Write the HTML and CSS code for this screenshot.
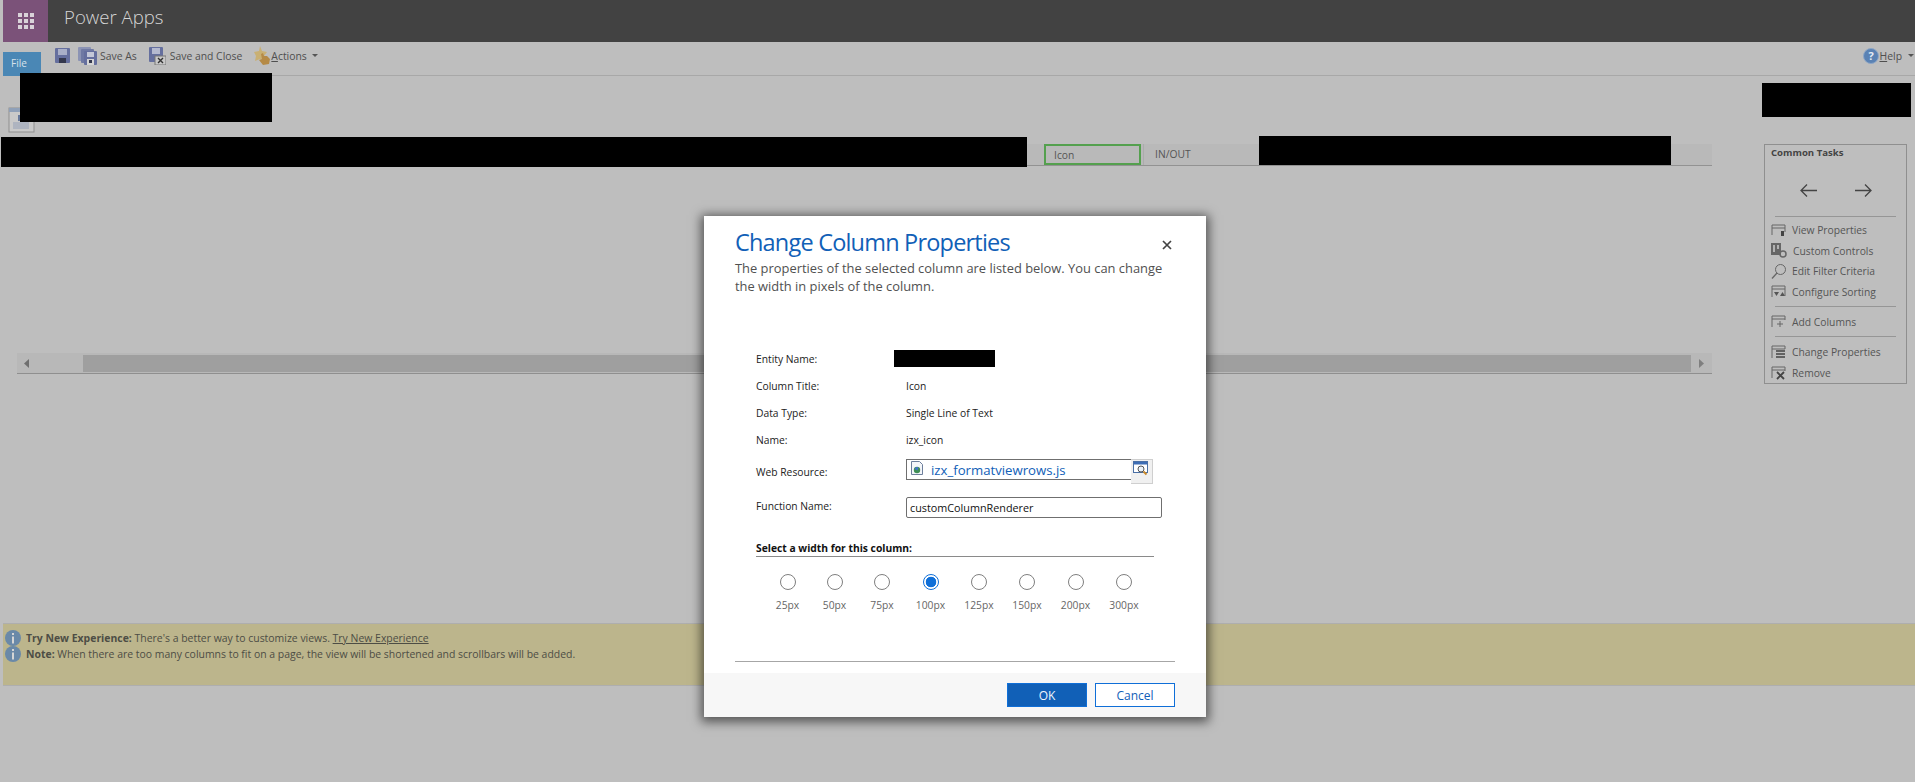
FILE: index.html
```html
<!DOCTYPE html>
<html lang="en">
<head>
<meta charset="utf-8">
<title>Power Apps</title>
<link rel="stylesheet" href="styles.css">
</head>
<body>
<header class="topbar">
  <div class="waffle">
    <svg width="16" height="16" viewBox="0 0 16 16" fill="#d9d3d9"><rect width="4" height="4"/><rect x="6" width="4" height="4"/><rect x="12" width="4" height="4"/><rect y="6" width="4" height="4"/><rect x="6" y="6" width="4" height="4"/><rect x="12" y="6" width="4" height="4"/><rect y="12" width="4" height="4"/><rect x="6" y="12" width="4" height="4"/><rect x="12" y="12" width="4" height="4"/></svg>
  </div>
  <div class="brand">Power Apps</div>
</header>

<nav class="toolbar">
  <div class="filetab">File</div>
  <svg class="tool-save" width="15" height="15" viewBox="0 0 15 15"><rect width="15" height="15" rx="1" fill="#656f9e"/><rect x="3" y="1" width="9" height="6" fill="#a9afc8"/><rect x="4" y="10" width="7" height="5" fill="#33374d"/></svg>
  <svg class="tool-saveas" width="19" height="18" viewBox="0 0 19 18"><rect width="13" height="14" rx="1" fill="#8b93b4"/><rect x="3" y="2" width="13" height="14" rx="1" fill="#6f79a3"/><rect x="6" y="4" width="13" height="14" rx="1" fill="#656f9e"/><rect x="9" y="5" width="7" height="5" fill="#c4c8d8"/><rect x="9" y="12" width="7" height="6" fill="#d5d5d5"/><rect x="11" y="13" width="3" height="3" fill="#33374d"/></svg>
  <span class="tool-text tool-text-saveas">Save As</span>
  <svg class="tool-close" width="17" height="18" viewBox="0 0 17 18"><rect width="14" height="15" rx="1" fill="#656f9e"/><rect x="3" y="1" width="8" height="6" fill="#b4b9cf"/><rect x="6" y="9" width="11" height="9" fill="#c8c8c8" stroke="#777"/><path d="M9 11l5 5M14 11l-5 5" stroke="#333" stroke-width="1.4"/></svg>
  <span class="tool-text tool-text-close">Save and Close</span>
  <svg class="tool-actions" width="17" height="19" viewBox="0 0 17 19"><path d="M6 0l2 5 5 1-3 4 1 5-5-2-5 2 1-5-2-4 5-1z" fill="#c9b073"/><path d="M7 8l2-1 1 3 3 0 3 3-1 5-6 1-4-5 3-1z" fill="#b58a46"/></svg>
  <span class="tool-text"><u>A</u>ctions</span>
  <span class="caret"></span>
  <div class="help">
    <svg width="16" height="16" viewBox="0 0 16 16"><circle cx="8" cy="8" r="7.5" fill="#5a82b4" stroke="#8da6c6"/><text x="8" y="12" text-anchor="middle" class="help-q">?</text></svg>
    <span class="tool-text"><u>H</u>elp</span>
    <span class="caret"></span>
  </div>
</nav>

<main class="workspace">
  <div class="editor">
    <svg class="view-icon" width="27" height="28" viewBox="0 0 27 28"><rect x="1" y="1" width="25" height="24" fill="#c9c9c9" stroke="#8f8f8f"/><rect x="1" y="1" width="25" height="4" fill="#8fa0b8"/><rect x="10" y="8" width="7" height="6" fill="#66789a"/><rect x="5" y="15" width="16" height="7" fill="#aeb4c0"/></svg>
    <div class="columns">
      <div class="col-spacer"></div>
      <div class="col col-icon">Icon</div>
      <div class="col col-inout">IN/OUT</div>
    </div>
    <div class="hscroll">
      <svg class="arrow" width="5" height="9" viewBox="0 0 5 9"><path d="M5 0v9L0 4.500z" fill="#6f6f6f"/></svg>
      <div class="thumb"></div>
      <svg class="arrow" width="5" height="9" viewBox="0 0 5 9"><path d="M0 0v9l5-4.500z" fill="#7f7f7f"/></svg>
    </div>
  </div>

  <aside class="tasks">
    <h3 class="tasks-title">Common Tasks</h3>
    <div class="tasks-arrows">
      <svg width="17" height="13" viewBox="0 0 17 13" fill="none" stroke="#444" stroke-width="1.300"><path d="M17 6.500H1M7 .5l-6 6 6 6"/></svg>
      <svg width="17" height="13" viewBox="0 0 17 13" fill="none" stroke="#444" stroke-width="1.300"><path d="M0 6.500h16M10 .5l6 6-6 6"/></svg>
    </div>
    <div class="tasks-rule rule-first"></div>
    <div class="task"><svg width="15" height="13" viewBox="0 0 15 13" fill="none" stroke="#666"><path d="M1 11V1h13v7M1 4h13"/><path d="M10 7h3v5h-3z" fill="#444" stroke="none"/></svg>View Properties</div>
    <div class="task"><svg width="16" height="15" viewBox="0 0 16 15"><rect width="10" height="12" fill="#666"/><path d="M3 2v7M7 2v4" stroke="#ccc" stroke-width="1.500"/><circle cx="12" cy="11" r="3" fill="none" stroke="#666" stroke-width="1.500"/></svg>Custom Controls</div>
    <div class="task"><svg width="15" height="15" viewBox="0 0 15 15" fill="none" stroke="#666"><circle cx="9.500" cy="5.500" r="5"/><path d="M6 9l-5 5.500" stroke-width="1.300"/></svg>Edit Filter Criteria</div>
    <div class="task"><svg width="15" height="13" viewBox="0 0 15 13" fill="none" stroke="#666"><path d="M1 12V1h13v10M1 4h13"/><path d="M3 7h5l-2.500 4zM9 11l2.500-4 2.500 4z" fill="#555" stroke="none"/></svg>Configure Sorting</div>
    <div class="tasks-rule rule-mid"></div>
    <div class="task"><svg width="15" height="13" viewBox="0 0 15 13" fill="none" stroke="#666"><path d="M1 12V1h13v4M1 4h13M9 6v6M6 9h6"/></svg>Add Columns</div>
    <div class="tasks-rule rule-mid"></div>
    <div class="task"><svg width="15" height="14" viewBox="0 0 15 14" fill="none" stroke="#666"><path d="M1 13V1h13v3M1 4h13"/><path d="M5 6h9M5 9h9M5 12h9" stroke="#444" stroke-width="1.600"/></svg>Change Properties</div>
    <div class="task"><svg width="15" height="14" viewBox="0 0 15 14" fill="none" stroke="#666"><path d="M1 12V1h13v4M1 4h13"/><path d="M6 6l7 7M13 6l-7 7" stroke="#444" stroke-width="1.800"/></svg>Remove</div>
  </aside>
</main>

<section class="notice">
  <p class="notice-line"><svg width="16" height="16" viewBox="0 0 16 16"><circle cx="8" cy="8" r="8" fill="#6a89a8"/><rect x="7" y="6.500" width="2" height="7" fill="#d5d5d5"/><rect x="7" y="3" width="2" height="2" fill="#d5d5d5"/></svg><span><b>Try New Experience:</b> There's a better way to customize views. <u>Try New Experience</u></span></p>
  <p class="notice-line"><svg width="16" height="16" viewBox="0 0 16 16"><circle cx="8" cy="8" r="8" fill="#6a89a8"/><rect x="7" y="6.500" width="2" height="7" fill="#d5d5d5"/><rect x="7" y="3" width="2" height="2" fill="#d5d5d5"/></svg><span><b>Note:</b> When there are too many columns to fit on a page, the view will be shortened and scrollbars will be added.</span></p>
</section>

<div class="redact redact-name"></div>
<div class="redact redact-corner"></div>
<div class="redact redact-strip"></div>
<div class="redact redact-cols"></div>

<div class="dialog" role="dialog">
  <div class="dialog-head">
    <h1 class="dialog-title">Change Column Properties</h1>
    <svg class="dialog-x" width="10" height="10" viewBox="0 0 10 10"><path d="M1 1l8 8M9 1l-8 8" stroke="#444" stroke-width="1.700"/></svg>
  </div>
  <p class="dialog-desc">The properties of the selected column are listed below. You can change the width in pixels of the column.</p>
  <div class="fields">
    <span class="lbl">Entity Name:</span><span class="val"><span class="redact-inline"></span></span>
    <span class="lbl">Column Title:</span><span class="val">Icon</span>
    <span class="lbl">Data Type:</span><span class="val">Single Line of Text</span>
    <span class="lbl">Name:</span><span class="val">izx_icon</span>
    <span class="lbl lbl-web">Web Resource:</span>
    <div class="lookup">
      <div class="lookup-box">
        <svg width="12" height="14" viewBox="0 0 12 14"><path d="M.5.500h8l3 3v10H.5z" fill="#f4f6fa" stroke="#6d7f9c"/><circle cx="6" cy="9" r="3.200" fill="#3f8f55"/><path d="M3.500 8a3 3 0 0 1 4-1.500l-1 3z" fill="#3f74c9"/></svg>
        <a class="lookup-link">izx_formatviewrows.js</a>
      </div>
      <div class="lookup-btn"><svg width="16" height="15" viewBox="0 0 16 15"><rect x=".5" y=".5" width="14" height="11" fill="#fff" stroke="#4a6fa5"/><rect x="1" y="1" width="13" height="2.500" fill="#3d6db5"/><circle cx="8" cy="8" r="3" fill="#eaf2fb" stroke="#555"/><path d="M10.500 10.500l3 3" stroke="#c98a2b" stroke-width="2"/></svg></div>
    </div>
    <span class="lbl">Function Name:</span>
    <div class="textbox">customColumnRenderer</div>
  </div>
  <h4 class="width-head">Select a width for this column:</h4>
  <div class="widths">
    <label class="width"><input type="radio" name="w"><span>25px</span></label>
    <label class="width"><input type="radio" name="w"><span>50px</span></label>
    <label class="width"><input type="radio" name="w"><span>75px</span></label>
    <label class="width"><input type="radio" name="w" checked><span>100px</span></label>
    <label class="width"><input type="radio" name="w"><span>125px</span></label>
    <label class="width"><input type="radio" name="w"><span>150px</span></label>
    <label class="width"><input type="radio" name="w"><span>200px</span></label>
    <label class="width"><input type="radio" name="w"><span>300px</span></label>
  </div>
  <div class="dialog-rule"></div>
  <div class="dialog-foot">
    <button class="btn btn-ok">OK</button>
    <button class="btn btn-cancel">Cancel</button>
  </div>
</div>
</body>
</html>
```

FILE: styles.css
```css
* { box-sizing: border-box; }
html, body { margin: 0; height: 782px; overflow: hidden; }
body {
  position: relative;
  background: #bebebe;
  font-family: "Open Sans", "Liberation Sans", sans-serif;
  font-size: 10.3px;
  color: #4a4a4a;
  padding-left: 3px;
}

/* top bar */
.topbar { display: flex; height: 42px; background: #424242; }
.waffle { width: 45px; background: #7b5279; display: flex; align-items: center; justify-content: center; padding-bottom: 1px; }
.brand { margin-left: 16px; font-size: 18.6px; font-weight: 300; line-height: 34px; color: #d6d6d6; }

/* toolbar */
.toolbar { display: flex; align-items: center; height: 34px; border-bottom: 1px solid #a8a8a8; position: relative; padding-bottom: 6px; }
.filetab { position: absolute; left: 0; top: 10px; width: 38px; height: 24px; background: #4a87b5; color: #d8e2ea; padding: 0 6px 0 0; text-align: center; line-height: 23px; font-size: 10px; }
.tool-save { margin-left: 52px; }
.tool-saveas { margin-left: 8px; }
.tool-text { font-size: 10.4px; color: #4f4f4f; white-space: nowrap; }
.tool-text-saveas { margin-left: 3px; }
.tool-close { margin-left: 12px; }
.tool-text-close { margin-left: 4px; }
.tool-actions { margin-left: 12px; }
.caret { margin-left: 5px; width: 0; height: 0; border: 3px solid transparent; border-top: 3px solid #555; border-bottom: 0; }
.help { margin-left: auto; display: flex; align-items: center; gap: 1px; padding-right: 1px; }
.help-q { font-size: 11px; font-weight: 700; fill: #e4ecf5; }

/* main region */
.workspace { display: flex; height: 547px; }
.editor { width: 1709px; padding-top: 31px; position: relative; }
.view-icon { position: absolute; left: 5px; top: 31px; }
.columns { display: flex; height: 22px; margin-top: 37px; background: #b9b9b9; border-bottom: 1px solid #929292; }
.col-spacer { width: 1041px; }
.col { font-size: 10.3px; line-height: 19px; color: #555; padding-left: 9px; }
.col-icon { width: 97px; height: 21px; border: 2px solid #54a04e; padding-left: 8px; }
.col-inout { margin-left: 2px; padding-left: 11px; width: 100px; border-left: 1px solid #acacac; line-height: 20px; }
.hscroll { display: flex; align-items: center; margin: 187px 0 0 14px; height: 21px; padding: 0 8px 0 7px; background: #b8b8b8; border-bottom: 1px solid #8f8f8f; }
.arrow { flex: none; }
.thumb { width: 1608px; height: 17px; margin: 0 0 0 54px; background: #9f9f9f; }
.hscroll .arrow:last-child { margin-left: auto; }

.tasks { margin: 68px 0 0 52px; width: 143px; height: 240px; border: 1px solid #8f8f8f; padding: 2px 0 0 6px; font-size: 10.3px; display: flex; flex-direction: column; }
.tasks-title { margin: 0; font-size: 9.6px; font-weight: 700; line-height: 12px; color: #444; }
.tasks-arrows { display: flex; gap: 38px; margin: 25px 0 0 29px; }
.tasks-rule { height: 1px; background: #969696; margin: 0 4px; width: 121px; }
.rule-first { margin-top: 19px; margin-bottom: 3px; }
.rule-mid { margin-top: 4px; margin-bottom: 4px; }
.rule-mid + .task { margin-top: 1px; }
.task { display: flex; align-items: center; gap: 6px; height: 21.4px; color: #555; white-space: nowrap; }
.task svg { flex: none; }

/* notice */
.notice { height: 63px; background: #bcb58c; border-top: 1px solid #aeaeae; border-bottom: 1px solid #aeaeae; padding-top: 6px; color: #4d4d45; font-size: 10.45px; width: 1912px; }
.notice-line { margin: 0; display: flex; align-items: center; height: 16px; gap: 5px; padding-left: 2px; white-space: nowrap; }
.notice-line svg { flex: none; }

/* redacted overlays */
.redact { position: absolute; background: #000; }
.redact-name { left: 20px; top: 73px; width: 252px; height: 49px; }
.redact-corner { left: 1762px; top: 83px; width: 149px; height: 34px; }
.redact-strip { left: 1px; top: 137px; width: 1026px; height: 30px; }
.redact-cols { left: 1259px; top: 136px; width: 412px; height: 29px; }
.redact-inline { display: block; width: 101px; height: 17px; margin-left: -12px; background: #000; }

/* dialog */
.dialog { position: absolute; left: 704px; top: 216px; width: 502px; height: 501px; background: #fff; box-shadow: 0 2px 10px 3px rgba(0,0,0,.55); display: flex; flex-direction: column; }
.dialog-head { display: flex; justify-content: space-between; align-items: flex-start; padding: 8px 34px 0 31px; height: 43px; }
.dialog-title { margin: 0; font-size: 23.5px; font-weight: 400; letter-spacing: -.8px; line-height: 36px; color: #1160b7; white-space: nowrap; }
.dialog-x { margin-top: 16px; }
.dialog-desc { margin: 0; padding: 0 31px; font-size: 12.900px; line-height: 18px; color: #505050; height: 36px; }
.fields { display: grid; grid-template-columns: 150px 256px; grid-template-rows: repeat(4, 27px) 36px 34px; margin: 51px 0 0 52px; align-items: center; font-size: 10.300px; color: #222; }
.lbl, .val { padding-bottom: 2px; }
.lbl-web { padding-bottom: 0; }
.val { color: #222; }
.lookup { display: flex; align-self: start; margin-top: 5px; }
.lookup-box { width: 226px; height: 21px; border: 1px solid #6f6f6f; display: flex; align-items: center; gap: 8px; padding-left: 4px; }
.lookup-box svg { flex: none; margin-top: -3px; }
.lookup-link { font-size: 13.200px; color: #1160b7; white-space: nowrap; }
.lookup-btn { width: 22px; height: 25px; margin-left: -1px; background: #f0f0f0; border: 1px solid #cfcfcf; border-left: 0; padding: 1px 0 0 2px; }
.textbox { height: 21px; border: 1px solid #6f6f6f; border-radius: 2px; padding-left: 3px; line-height: 19px; font-size: 10.800px; color: #111; }
.width-head { margin: 16px 0 0 52px; width: 398px; height: 17px; border-bottom: 1px solid #8a8a8a; font-size: 10.300px; font-weight: 700; line-height: 16px; color: #111; }
.widths { display: grid; grid-template-columns: 47px 47px 48px 49px 48px 48px 49px 48px; margin: 17px 0 0 60px; }
.width { display: flex; flex-direction: column; align-items: center; gap: 8px; font-size: 10.300px; line-height: 14px; color: #666; }
.width input { appearance: none; margin: 0; width: 16px; height: 16px; border: 1px solid #7f7f7f; border-radius: 50%; background: #fff; }
.width input:checked { border-color: #0f6fd8; background: radial-gradient(circle, #0f6fd8 0 5px, #fff 5.600px); }
.dialog-rule { height: 1px; margin: 49px 31px 0 31px; background: #a6a6a6; }
.dialog-foot { margin-top: auto; height: 44px; background: #f7f7f7; display: flex; justify-content: flex-end; gap: 8px; padding: 10px 31px 0 0; }
.btn { width: 80px; height: 24px; font-family: inherit; font-size: 12px; padding: 0; border: 1px solid #0f6fd8; }
.btn-ok { background: #1160b7; color: #eef4fb; }
.btn-cancel { background: #fff; color: #1160b7; }
```
